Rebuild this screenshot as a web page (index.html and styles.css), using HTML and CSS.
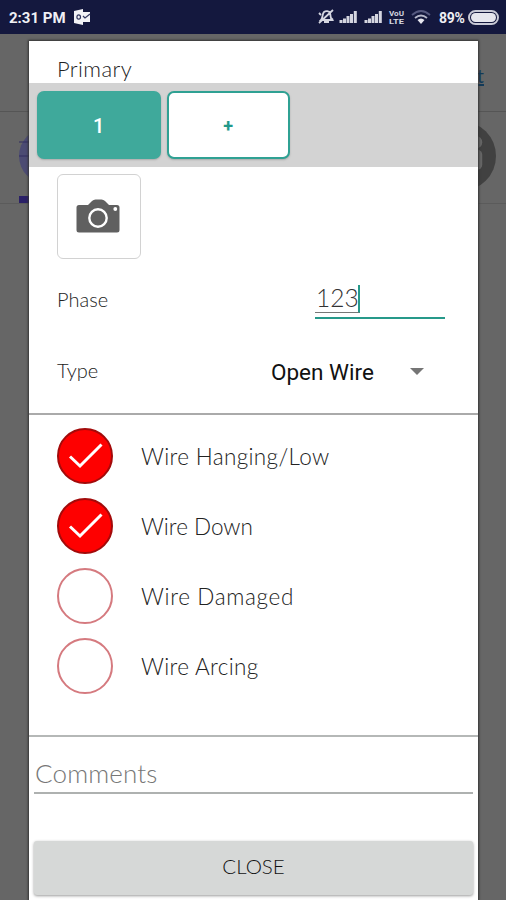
FILE: index.html
```html
<!DOCTYPE html>
<html lang="en">
<head>
<meta charset="utf-8">
<title>Primary</title>
<link rel="stylesheet" href="styles.css">
</head>
<body>
<header class="status">
  <span class="time">2:31 PM</span>
  <svg class="mail" width="17" height="16" viewBox="0 0 17 16"><path d="M0 2L9 0v16L0 14z" fill="#f2f2f6"/><path d="M9 3h7v10H9z" fill="#f2f2f6"/><ellipse cx="4.7" cy="8" rx="1.8" ry="2.2" fill="none" stroke="#33385f" stroke-width="1.2"/><path d="M9 7l2 2 5-4" fill="none" stroke="#33385f" stroke-width="1.2"/></svg>
  <svg class="icons" width="120" height="20" viewBox="0 0 120 20">
    <g fill="none" stroke="#d5d6e0" stroke-width="1.8"><path d="M4 13c2-2 1-6 3-8 2-1.500 5-1 6 1 1 3 0 5 2 7zM2 16L16 3M7 15h5M2 6l2 2M14 11l2 2"/></g>
    <g fill="#d5d6e0"><path d="M22.500 13h3v3h-3zM26 11.500h3v4.500h-3zM29.500 9h3v7h-3zM33 7h3v9h-3zM36.800 4h3v12h-3zM47.500 13h3v3h-3zM51 11.500h3v4.500h-3zM54.500 9h3v7h-3zM58 7h3v9h-3zM61.800 4h3v12h-3z"/></g>
    <text x="72" y="8.500" class="tiny" textLength="15" lengthAdjust="spacingAndGlyphs">VoU</text>
    <text x="72" y="17" class="tiny" textLength="15" lengthAdjust="spacingAndGlyphs">LTE</text>
    <path d="M95 8q9-8 18 0" fill="none" stroke="#555980" stroke-width="1.800"/><path d="M98 11q6-5 12 0" fill="none" stroke="#b6b8cb" stroke-width="1.800"/><path d="M100.500 13q3.500-3 7 0l-3.500 4z" fill="#e8e8f0"/>
  </svg>
  <span class="percent">89%</span>
  <span class="battery"><i></i></span>
</header>
<div class="backdrop">
  <div class="topbar"><span>t</span></div>
  <div class="tabs">
    <svg width="56" height="56" viewBox="0 0 56 56"><circle cx="28" cy="28" r="28" fill="#4c4b73"/><path d="M0 14h28M0 28h28" stroke="#302c60"/></svg>
    <svg width="56" height="56" viewBox="0 0 56 56"><circle cx="28" cy="28" r="28" fill="#414141"/><circle cx="40" cy="17" r="5" fill="#666"/><rect x="34" y="23" width="11" height="16" rx="4" fill="#666"/></svg>
  </div>
  <div class="marker"></div>
</div>
<main class="dialog">
  <h1 class="title"><span>Primary</span></h1>
  <div class="strip">
    <button class="tab active">1</button>
    <button class="tab">+</button>
  </div>
  <section class="details">
    <button class="camera" aria-label="Camera">
      <svg width="44" height="34" viewBox="0 0 44 34"><path d="M3 6h9l4-4q1.500-1.500 3.500-1.500h6Q27.500.500 29 2l4 4h8q2.500 0 2.500 2.500v22.500q0 2.500-2.500 2.500H3Q.500 33.500.500 31V8.500Q.500 6 3 6z" fill="#606060"/><circle cx="22" cy="19" r="8.700" fill="none" stroke="#fff" stroke-width="2.400"/><circle cx="39.300" cy="10" r="1.900" fill="#fff"/></svg>
    </button>
    <div class="row phase"><label>Phase</label><div class="input"><span class="value">123</span></div></div>
    <div class="row type"><label>Type</label><div class="select"><span>Open Wire</span><i class="arrow"></i></div></div>
  </section>
  <ul class="checks">
    <li><span class="dot on"><svg width="56" height="56" viewBox="0 0 56 56"><path d="M13 28.500L23 38 44.500 16.500" fill="none" stroke="#fff" stroke-width="3"/></svg></span><span class="label">Wire Hanging/Low</span></li>
    <li><span class="dot on"><svg width="56" height="56" viewBox="0 0 56 56"><path d="M13 28.500L23 38 44.500 16.500" fill="none" stroke="#fff" stroke-width="3"/></svg></span><span class="label tight">Wire Down</span></li>
    <li><span class="dot"></span><span class="label wide">Wire Damaged</span></li>
    <li><span class="dot"></span><span class="label">Wire Arcing</span></li>
  </ul>
  <div class="comments"><span>Comments</span></div>
  <button class="close"><span>CLOSE</span></button>
</main>
</body>
</html>
```
FILE: styles.css
```css
* { box-sizing: border-box; }
body { margin: 0; width: 506px; height: 900px; overflow: hidden; position: relative; background: #666; font-family: Lato, sans-serif; font-weight: 300; color: #222; }
button { font-family: inherit; padding: 0; margin: 0; }
.status { height: 34px; background: #14183e; display: flex; align-items: center; padding-left: 9px; color: #f0f0f5; }
.time { font: 700 15px Roboto, sans-serif; width: 65px; white-space: nowrap; padding-top: 1px; }
.mail { flex: none; }
.icons { margin-left: 226px; flex: none; }
.tiny { font: 700 7.5px Roboto, sans-serif; fill: #d5d6e0; }
.percent { font: 700 14px Roboto, sans-serif; width: 29px; margin-left: 2px; letter-spacing: -0.3px; padding-top: 1px; }
.battery { width: 31px; height: 15px; border: 2px solid #c9cad6; border-radius: 8px; padding: 1px; }
.battery i { display: block; height: 9px; border-radius: 5px; background: #e6e6ed; }
.backdrop { height: 866px; }
.topbar { height: 78px; border-bottom: 1px solid #555; display: flex; justify-content: flex-end; padding: 29px 22px 0 0; color: #123a59; font-size: 20px; font-weight: 400; text-decoration: underline; }
.tabs { height: 92px; border-bottom: 1px solid #5b5b5b; display: flex; justify-content: space-between; align-items: center; padding: 0 10px 4px 19px; }
.tabs svg { flex: none; }
.tabs svg:last-child { width: 70px; height: 70px; }
.marker { width: 56px; height: 7px; margin: -8px 0 0 19px; background: #2a2067; }
.dialog { position: absolute; left: 29px; top: 41px; width: 449px; height: 859px; background: #fff; box-shadow: 0 0 2px 1px #333; display: flex; flex-direction: column; }
.title { margin: 0; height: 42px; padding: 15px 0 0 28px; font-size: 22px; line-height: 26px; font-weight: 300; letter-spacing: 0.4px; }
.strip { height: 84px; flex: none; background: #d3d3d3; display: flex; gap: 6px; padding: 8px; }
.tab { width: 123.5px; height: 68px; border: 2.5px solid #2fa193; border-radius: 7px; background: #fff; color: #22998a; font: 700 18px Roboto, sans-serif; box-shadow: 0 1px 2px #aaa; }
.tab.active { background: #3fa99b; border-color: #3fa99b; color: #fff; font-size: 20px; font-weight: 500; padding-top: 2px; }
.details { height: 248px; flex: none; border-bottom: 2px solid #aaa; padding: 7px 28px 0; }
.camera { width: 84px; height: 85px; display: flex; align-items: center; justify-content: center; background: #fff; border: 1.5px solid #d2d2d2; border-radius: 6px; padding: 0 2px 1px 0; }
.row { display: flex; justify-content: space-between; align-items: center; font-size: 20px; }
.row label { padding-bottom: 4px; }
.phase { height: 84px; }
.type { height: 58px; }
.input { width: 130px; height: 38px; border-bottom: 2px solid #26998a; margin: -2px 5px 0 0; padding-top: 4px; }
.value { display: inline-block; font-size: 24.5px; line-height: 25px; height: 28px; border-bottom: 1px solid #777; border-right: 2.5px solid #26998a; width: 45px; padding-left: 1px; color: #333; }
.select { display: flex; align-items: center; width: 153px; margin: -1px 26px 0 0; justify-content: space-between; font: 400 22.5px Roboto, sans-serif; color: #111; }
.arrow { border: 7px solid transparent; border-top-color: #757575; border-bottom: 0; }
.checks { list-style: none; margin: 0; height: 322px; flex: none; padding: 6px 28px 0; border-bottom: 2px solid #b5b8b7; }
.checks li { display: flex; align-items: center; height: 70px; gap: 28px; font-size: 22.5px; }
.label { letter-spacing: 0.35px; }
.tight { letter-spacing: 0; }
.wide { letter-spacing: 0.65px; }
.dot { width: 56px; height: 56px; border: 2px solid #d57a7f; border-radius: 50%; display: flex; align-items: center; justify-content: center; }
.dot.on { background: #fe0000; border-color: #a30a0a; }
.dot svg { flex: none; }
.comments { height: 57px; flex: none; margin: 0 5px; padding: 19px 1px 0; border-bottom: 2px solid #aeb1b0; font-size: 26px; line-height: 34px; color: #777; letter-spacing: 0.15px; }
.close { margin: 47px 5px 0; height: 54px; flex: none; border: 0; border-radius: 3px; background: #d6d8d7; box-shadow: 0 1px 3px #999; font-size: 20.5px; font-weight: 300; color: #111; padding-bottom: 5px; }
```
